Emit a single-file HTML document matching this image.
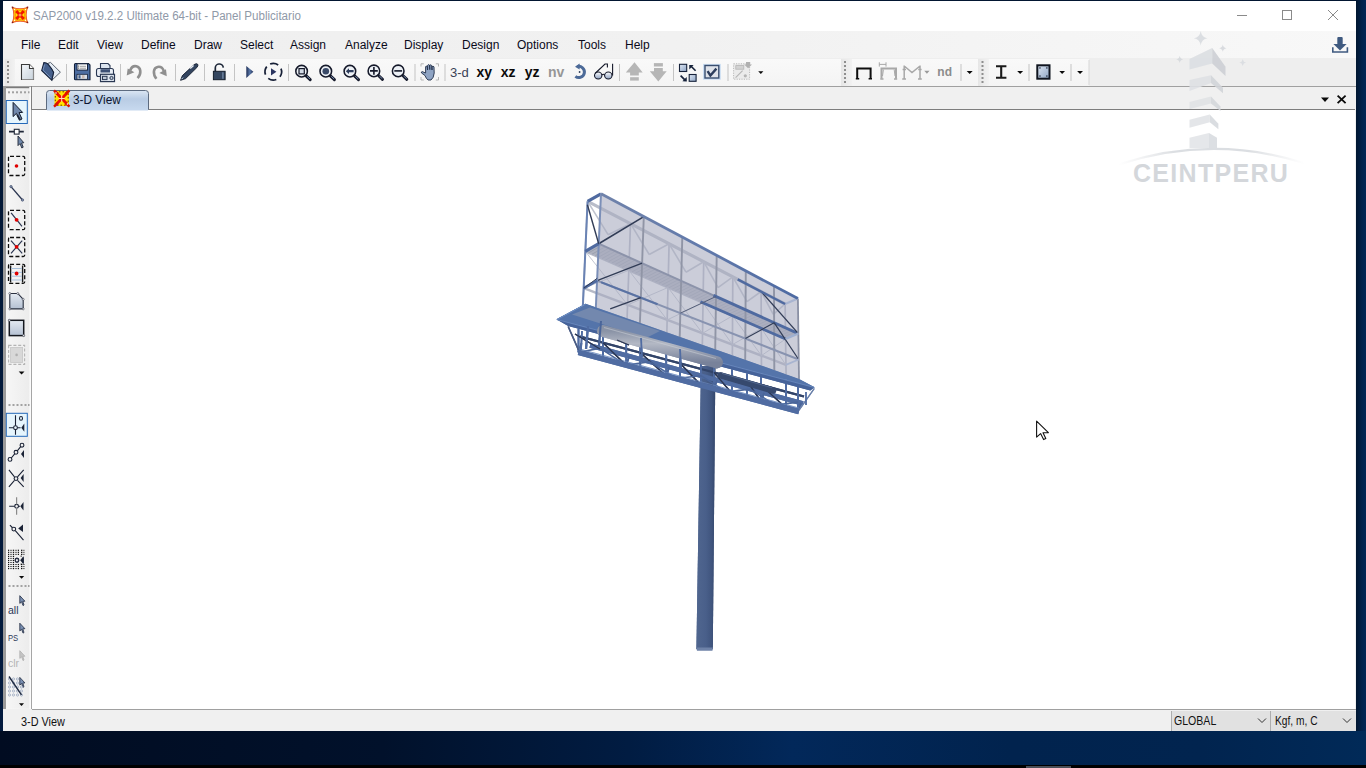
<!DOCTYPE html>
<html><head><meta charset="utf-8">
<style>
*{box-sizing:border-box}
html,body{margin:0;padding:0}
body{width:1366px;height:768px;overflow:hidden;position:relative;background:#021531;font-family:"Liberation Sans",sans-serif;}
.a{position:absolute}
.t{position:absolute;white-space:nowrap;font-family:"Liberation Sans",sans-serif;}
.menu span{position:absolute;top:38px;font-size:12px;color:#0a0a1a;white-space:nowrap}
svg{position:absolute;overflow:visible}
</style></head><body>
<!-- desktop -->
<div class="a" style="left:0;top:0;width:1366px;height:768px;background:linear-gradient(180deg,#021631 0%,#02193a 50%,#021a3e 100%)"></div>
<div class="a" style="left:0;top:731px;width:1366px;height:37px;background:linear-gradient(90deg,#010c21 0%,#01112b 28%,#011c42 46%,#02285a 58%,#01234e 74%,#01244f 88%,#012a58 100%)"></div>
<div class="a" style="left:1356px;top:0;width:10px;height:731px;background:linear-gradient(90deg,#011630,#01214b 60%,#022656)"></div>
<div class="a" style="left:0;top:765px;width:1366px;height:3px;background:#000"></div>
<div class="a" style="left:1026px;top:766px;width:45px;height:2px;background:#4a4f58"></div>

<!-- window base -->
<div class="a" style="left:3px;top:1px;width:1353px;height:730px;background:#f0f0f0"></div>
<!-- title bar -->
<div class="a" style="left:3px;top:1px;width:1353px;height:30px;background:#fff"></div>
<div id="title" class="t" style="left:33px;top:9px;font-size:12.5px;color:#8f99a8;transform:scaleX(0.927);transform-origin:left">SAP2000 v19.2.2 Ultimate 64-bit - Panel Publicitario</div>

<!-- menu bar -->
<div class="a" style="left:3px;top:31px;width:1353px;height:27px;background:linear-gradient(90deg,#efefef 0%,#f1f1f1 50%,#f8f8f8 100%)"></div>
<div class="menu">
<span style="left:21px">File</span>
<span style="left:58px">Edit</span>
<span style="left:97px">View</span>
<span style="left:141px">Define</span>
<span style="left:194px">Draw</span>
<span style="left:240px">Select</span>
<span style="left:290px">Assign</span>
<span style="left:345px">Analyze</span>
<span style="left:404px">Display</span>
<span style="left:462px">Design</span>
<span style="left:517px">Options</span>
<span style="left:578px">Tools</span>
<span style="left:625px">Help</span>
</div>

<!-- toolbar row -->
<div class="a" style="left:3px;top:58px;width:1353px;height:28px;background:#eeeeee"></div>
<div class="a" style="left:5px;top:59px;width:836px;height:27px;background:linear-gradient(180deg,#f9f9f9,#f4f4f4)"></div>
<div class="a" style="left:841px;top:59px;width:137px;height:27px;background:linear-gradient(180deg,#f9f9f9,#f4f4f4)"></div>
<div class="a" style="left:978px;top:59px;width:111px;height:27px;background:linear-gradient(180deg,#f9f9f9,#f4f4f4)"></div>
<div class="a" style="left:3px;top:86px;width:1353px;height:1px;background:#a0a0a0"></div>

<!-- left border strip -->
<div class="a" style="left:3px;top:86px;width:3px;height:623px;background:#9a9a9a"></div>
<!-- left toolbar -->
<div class="a" style="left:6px;top:87px;width:25px;height:622px;background:linear-gradient(90deg,#f7f7f7,#efefef)"></div>
<div class="a" style="left:31px;top:87px;width:1px;height:622px;background:#a0a0a0"></div>

<!-- tab row -->
<div class="a" style="left:32px;top:87px;width:1324px;height:22px;background:#f0f0f0"></div>
<div class="a" style="left:32px;top:109px;width:1323px;height:1px;background:#7d7d7d"></div>

<!-- view -->
<div class="a" style="left:32px;top:110px;width:1323px;height:599px;background:#fff"></div>
<div class="a" style="left:32px;top:709px;width:1324px;height:1px;background:#a0a0a0"></div>

<!-- status bar -->
<div class="a" style="left:4px;top:710px;width:1352px;height:21px;background:#f0f0f0"></div>
<div class="t" style="left:20.6px;top:715px;font-size:12.5px;color:#111;transform:scaleX(0.87);transform-origin:left">3-D View</div>
<div class="a" style="left:1171px;top:711px;width:99px;height:20px;background:#e1e1e1;border-left:1px solid #adadad"></div>
<div class="t" style="left:1174px;top:714px;font-size:12px;color:#111;transform:scaleX(0.88);transform-origin:left">GLOBAL</div>
<div class="a" style="left:1270px;top:711px;width:86px;height:20px;background:#e1e1e1;border-left:1px solid #adadad"></div>
<div class="t" style="left:1275px;top:714px;font-size:12px;color:#111;transform:scaleX(0.85);transform-origin:left">Kgf, m, C</div>
<svg style="left:0;top:0" width="1366" height="768">
<path d="M1258 718.5 L1262 722.5 L1266 718.5" fill="none" stroke="#333" stroke-width="1"/>
<path d="M1343 718.5 L1347 722.5 L1351 718.5" fill="none" stroke="#333" stroke-width="1"/>
</svg>

<!-- BILLBOARD -->
<svg style="left:0;top:0" width="1366" height="768">
<defs><linearGradient id="gPole" x1="0" y1="0" x2="1" y2="0"><stop offset="0" stop-color="#50668f"/><stop offset="0.5" stop-color="#495f8a"/><stop offset="0.8" stop-color="#40557e"/><stop offset="1" stop-color="#34476b"/></linearGradient><linearGradient id="gLamp" x1="0" y1="0" x2="0" y2="1"><stop offset="0" stop-color="#8a93a6"/><stop offset="0.4" stop-color="#b3b8c4"/><stop offset="1" stop-color="#78829a"/></linearGradient></defs>
<polygon points="701,366 715.4,366 712.8,649 696.4,649" fill="url(#gPole)"/>
<polygon points="696.4,647.6 712.8,647.6 712.4,650.6 697,650.6" fill="#6e82a8"/>
<line x1="590.0" y1="345.5" x2="803.0" y2="403.5" stroke="#506ca2" stroke-width="4.6"/>
<line x1="580.0" y1="336.5" x2="804.0" y2="396.5" stroke="#33456a" stroke-width="2.2"/>
<line x1="578.5" y1="352.4" x2="581.5" y2="343.2" stroke="#4a6599" stroke-width="1.8"/>
<line x1="626.2" y1="365.2" x2="629.2" y2="356.2" stroke="#4a6599" stroke-width="1.8"/>
<line x1="666.2" y1="375.9" x2="669.2" y2="367.1" stroke="#4a6599" stroke-width="1.8"/>
<line x1="714.0" y1="388.7" x2="717.0" y2="380.1" stroke="#4a6599" stroke-width="1.8"/>
<line x1="761.0" y1="401.3" x2="764.0" y2="392.9" stroke="#4a6599" stroke-width="1.8"/>
<line x1="798.0" y1="411.2" x2="801.0" y2="403.0" stroke="#4a6599" stroke-width="1.8"/>
<line x1="578.5" y1="328.7" x2="578.5" y2="352.4" stroke="#506ca2" stroke-width="1.9"/>
<line x1="603.0" y1="335.2" x2="603.0" y2="359.0" stroke="#506ca2" stroke-width="1.9"/>
<line x1="626.2" y1="341.4" x2="626.2" y2="365.2" stroke="#506ca2" stroke-width="1.9"/>
<line x1="640.2" y1="345.1" x2="640.2" y2="368.9" stroke="#506ca2" stroke-width="1.9"/>
<line x1="666.2" y1="352.0" x2="666.2" y2="375.9" stroke="#506ca2" stroke-width="1.9"/>
<line x1="680.0" y1="355.6" x2="680.0" y2="379.6" stroke="#506ca2" stroke-width="1.9"/>
<line x1="701.0" y1="361.2" x2="701.0" y2="385.2" stroke="#506ca2" stroke-width="1.9"/>
<line x1="714.0" y1="364.7" x2="714.0" y2="388.7" stroke="#506ca2" stroke-width="1.9"/>
<line x1="732.0" y1="369.4" x2="732.0" y2="393.5" stroke="#506ca2" stroke-width="1.9"/>
<line x1="747.0" y1="373.4" x2="747.0" y2="397.6" stroke="#506ca2" stroke-width="1.9"/>
<line x1="761.0" y1="377.1" x2="761.0" y2="401.3" stroke="#506ca2" stroke-width="1.9"/>
<line x1="786.0" y1="383.8" x2="786.0" y2="408.0" stroke="#506ca2" stroke-width="1.9"/>
<line x1="798.0" y1="386.9" x2="798.0" y2="411.2" stroke="#506ca2" stroke-width="1.9"/>
<line x1="603.0" y1="342.7" x2="626.2" y2="365.2" stroke="#2b3652" stroke-width="1.4"/>
<line x1="640.2" y1="352.6" x2="666.2" y2="375.9" stroke="#2b3652" stroke-width="1.4"/>
<line x1="680.0" y1="363.3" x2="701.0" y2="385.2" stroke="#2b3652" stroke-width="1.4"/>
<line x1="714.0" y1="372.4" x2="732.0" y2="393.5" stroke="#2b3652" stroke-width="1.4"/>
<line x1="747.0" y1="381.2" x2="761.0" y2="401.3" stroke="#2b3652" stroke-width="1.4"/>
<line x1="761.0" y1="385.0" x2="786.0" y2="408.0" stroke="#2b3652" stroke-width="1.4"/>
<line x1="578.5" y1="352.4" x2="799.0" y2="411.5" stroke="#506ca2" stroke-width="5.6"/>
<line x1="578.5" y1="348.8" x2="799.0" y2="408.1" stroke="#6c8bbf" stroke-width="0.9" stroke-opacity="0.7"/>
<line x1="568.2" y1="326.5" x2="578.5" y2="350.0" stroke="#4a5c84" stroke-width="1.5"/>
<line x1="582.0" y1="331.0" x2="581.0" y2="350.0" stroke="#506ca2" stroke-width="1.7"/>
<line x1="575.0" y1="334.0" x2="600.0" y2="349.0" stroke="#2b3652" stroke-width="1.2"/>
<line x1="814.3" y1="388.5" x2="799.5" y2="409.5" stroke="#6a80aa" stroke-width="1.3"/>
<line x1="806.0" y1="392.0" x2="806.0" y2="405.0" stroke="#506ca2" stroke-width="1.4"/>
<polygon points="556.4,319.3 585.5,303.7 799.0,378.9 814.6,387.2" fill="#5474aa"/>
<polygon points="556.4,319.3 814.6,387.2 810.3,390.4 568.2,326.0" fill="#46639a"/>
<polygon points="572.0,314.6 590.0,307.5 660.0,331.0 646.0,338.0" fill="#8d99b0" fill-opacity="0.55"/>
<line x1="557.5" y1="319.3" x2="585.5" y2="304.3" stroke="#6f8fc4" stroke-width="1.0"/>
<line x1="557.0" y1="319.6" x2="814.0" y2="387.4" stroke="#7090c4" stroke-width="0.9" stroke-opacity="0.8"/>
<line x1="603" y1="331" x2="717" y2="362.4" stroke="url(#gLamp)" stroke-width="12" stroke-linecap="round"/>
<line x1="604.0" y1="327.5" x2="716.0" y2="358.5" stroke="#d0d3da" stroke-width="1.2" stroke-opacity="0.5"/>
<line x1="721.0" y1="375.5" x2="773.0" y2="390.5" stroke="#36496e" stroke-width="6.5" stroke-linecap="round"/>
<line x1="722.0" y1="373.4" x2="772.0" y2="387.8" stroke="#5a6f96" stroke-width="1.0" stroke-opacity="0.8"/>
<line x1="588.0" y1="326.0" x2="586.0" y2="349.0" stroke="#506ca2" stroke-width="2.2"/>
<line x1="601.0" y1="321.0" x2="599.0" y2="346.0" stroke="#4a6599" stroke-width="2.0"/>
<line x1="641.0" y1="338.0" x2="642.0" y2="357.0" stroke="#506ca2" stroke-width="1.8"/>
<line x1="680.0" y1="349.0" x2="681.0" y2="368.0" stroke="#506ca2" stroke-width="1.8"/>
<line x1="617.0" y1="340.0" x2="629.0" y2="345.0" stroke="#2b3652" stroke-width="1.2"/>
<defs><linearGradient id="gTop" gradientUnits="userSpaceOnUse" x1="601" y1="194" x2="798" y2="299"><stop offset="0" stop-color="#6f82aa"/><stop offset="0.5" stop-color="#627aab"/><stop offset="1" stop-color="#4d6aa2"/></linearGradient></defs>
<line x1="587.6" y1="201.4" x2="582.5" y2="313.8" stroke="#b6bac7" stroke-width="1.7"/>
<line x1="630.5" y1="223.7" x2="626.7" y2="328.8" stroke="#b6bac7" stroke-width="1.7"/>
<line x1="669.1" y1="243.8" x2="666.6" y2="342.3" stroke="#b6bac7" stroke-width="1.7"/>
<line x1="703.7" y1="261.7" x2="702.2" y2="354.3" stroke="#b6bac7" stroke-width="1.7"/>
<line x1="732.8" y1="276.9" x2="732.3" y2="364.5" stroke="#b6bac7" stroke-width="1.7"/>
<line x1="761.1" y1="291.5" x2="761.5" y2="374.4" stroke="#b6bac7" stroke-width="1.7"/>
<line x1="785.1" y1="304.0" x2="786.2" y2="382.8" stroke="#b6bac7" stroke-width="1.7"/>
<line x1="587.6" y1="201.4" x2="785.1" y2="304.0" stroke="#b9bdc9" stroke-width="3.2"/>
<line x1="585.3" y1="251.3" x2="785.6" y2="339.0" stroke="#b6bac7" stroke-width="2.4"/>
<line x1="583.7" y1="288.2" x2="785.9" y2="364.9" stroke="#b6bac7" stroke-width="2.4"/>
<line x1="587.6" y1="201.4" x2="608.1" y2="234.7" stroke="#bfc3ce" stroke-width="1.6"/>
<line x1="630.5" y1="223.7" x2="608.1" y2="234.7" stroke="#bfc3ce" stroke-width="1.6"/>
<line x1="585.3" y1="251.3" x2="627.6" y2="304.9" stroke="#c3c7d2" stroke-width="1.0"/>
<line x1="628.8" y1="270.3" x2="583.7" y2="288.2" stroke="#c3c7d2" stroke-width="1.0"/>
<line x1="630.5" y1="223.7" x2="649.2" y2="254.5" stroke="#bfc3ce" stroke-width="1.6"/>
<line x1="669.1" y1="243.8" x2="649.2" y2="254.5" stroke="#bfc3ce" stroke-width="1.6"/>
<line x1="628.8" y1="270.3" x2="667.2" y2="319.9" stroke="#c3c7d2" stroke-width="1.0"/>
<line x1="668.0" y1="287.5" x2="627.6" y2="304.9" stroke="#c3c7d2" stroke-width="1.0"/>
<line x1="669.1" y1="243.8" x2="686.0" y2="272.2" stroke="#bfc3ce" stroke-width="1.6"/>
<line x1="703.7" y1="261.7" x2="686.0" y2="272.2" stroke="#bfc3ce" stroke-width="1.6"/>
<line x1="668.0" y1="287.5" x2="702.5" y2="333.3" stroke="#c3c7d2" stroke-width="1.0"/>
<line x1="703.0" y1="302.8" x2="667.2" y2="319.9" stroke="#c3c7d2" stroke-width="1.0"/>
<line x1="703.7" y1="261.7" x2="718.0" y2="287.7" stroke="#bfc3ce" stroke-width="1.6"/>
<line x1="732.8" y1="276.9" x2="718.0" y2="287.7" stroke="#bfc3ce" stroke-width="1.6"/>
<line x1="703.0" y1="302.8" x2="732.4" y2="344.6" stroke="#c3c7d2" stroke-width="1.0"/>
<line x1="732.6" y1="315.8" x2="702.5" y2="333.3" stroke="#c3c7d2" stroke-width="1.0"/>
<line x1="732.8" y1="276.9" x2="747.0" y2="301.6" stroke="#bfc3ce" stroke-width="1.6"/>
<line x1="761.1" y1="291.5" x2="747.0" y2="301.6" stroke="#bfc3ce" stroke-width="1.6"/>
<line x1="732.6" y1="315.8" x2="761.4" y2="355.6" stroke="#c3c7d2" stroke-width="1.0"/>
<line x1="761.3" y1="328.3" x2="732.4" y2="344.6" stroke="#c3c7d2" stroke-width="1.0"/>
<line x1="761.1" y1="291.5" x2="773.3" y2="314.3" stroke="#bfc3ce" stroke-width="1.6"/>
<line x1="785.1" y1="304.0" x2="773.3" y2="314.3" stroke="#bfc3ce" stroke-width="1.6"/>
<line x1="761.3" y1="328.3" x2="785.9" y2="364.9" stroke="#c3c7d2" stroke-width="1.0"/>
<line x1="785.6" y1="339.0" x2="761.4" y2="355.6" stroke="#c3c7d2" stroke-width="1.0"/>
<polygon points="598.7,243.7 798.4,333.6 785.6,339.0 585.3,251.3" fill="#aeb2bf"/>
<line x1="598.7" y1="243.7" x2="585.3" y2="251.3" stroke="#9499a8" stroke-width="0.7"/>
<line x1="602.1" y1="245.2" x2="588.7" y2="252.8" stroke="#9499a8" stroke-width="0.7"/>
<line x1="605.4" y1="246.7" x2="592.0" y2="254.2" stroke="#9499a8" stroke-width="0.7"/>
<line x1="608.7" y1="248.2" x2="595.4" y2="255.7" stroke="#9499a8" stroke-width="0.7"/>
<line x1="612.0" y1="249.7" x2="598.7" y2="257.1" stroke="#9499a8" stroke-width="0.7"/>
<line x1="615.4" y1="251.2" x2="602.0" y2="258.6" stroke="#9499a8" stroke-width="0.7"/>
<line x1="618.7" y1="252.7" x2="605.4" y2="260.1" stroke="#9499a8" stroke-width="0.7"/>
<line x1="622.0" y1="254.2" x2="608.7" y2="261.5" stroke="#9499a8" stroke-width="0.7"/>
<line x1="625.4" y1="255.7" x2="612.0" y2="263.0" stroke="#9499a8" stroke-width="0.7"/>
<line x1="628.7" y1="257.2" x2="615.4" y2="264.4" stroke="#9499a8" stroke-width="0.7"/>
<line x1="632.0" y1="258.7" x2="618.7" y2="265.9" stroke="#9499a8" stroke-width="0.7"/>
<line x1="635.3" y1="260.2" x2="622.0" y2="267.4" stroke="#9499a8" stroke-width="0.7"/>
<line x1="638.7" y1="261.7" x2="625.4" y2="268.8" stroke="#9499a8" stroke-width="0.7"/>
<line x1="642.0" y1="263.2" x2="628.7" y2="270.3" stroke="#9499a8" stroke-width="0.7"/>
<line x1="645.3" y1="264.7" x2="632.1" y2="271.8" stroke="#9499a8" stroke-width="0.7"/>
<line x1="648.6" y1="266.2" x2="635.4" y2="273.2" stroke="#9499a8" stroke-width="0.7"/>
<line x1="652.0" y1="267.7" x2="638.7" y2="274.7" stroke="#9499a8" stroke-width="0.7"/>
<line x1="655.3" y1="269.2" x2="642.1" y2="276.1" stroke="#9499a8" stroke-width="0.7"/>
<line x1="658.6" y1="270.7" x2="645.4" y2="277.6" stroke="#9499a8" stroke-width="0.7"/>
<line x1="662.0" y1="272.2" x2="648.7" y2="279.1" stroke="#9499a8" stroke-width="0.7"/>
<line x1="665.3" y1="273.7" x2="652.1" y2="280.5" stroke="#9499a8" stroke-width="0.7"/>
<line x1="668.6" y1="275.2" x2="655.4" y2="282.0" stroke="#9499a8" stroke-width="0.7"/>
<line x1="671.9" y1="276.7" x2="658.8" y2="283.4" stroke="#9499a8" stroke-width="0.7"/>
<line x1="675.3" y1="278.1" x2="662.1" y2="284.9" stroke="#9499a8" stroke-width="0.7"/>
<line x1="678.6" y1="279.6" x2="665.4" y2="286.4" stroke="#9499a8" stroke-width="0.7"/>
<line x1="681.9" y1="281.1" x2="668.8" y2="287.8" stroke="#9499a8" stroke-width="0.7"/>
<line x1="685.2" y1="282.6" x2="672.1" y2="289.3" stroke="#9499a8" stroke-width="0.7"/>
<line x1="688.6" y1="284.1" x2="675.4" y2="290.8" stroke="#9499a8" stroke-width="0.7"/>
<line x1="691.9" y1="285.6" x2="678.8" y2="292.2" stroke="#9499a8" stroke-width="0.7"/>
<line x1="695.2" y1="287.1" x2="682.1" y2="293.7" stroke="#9499a8" stroke-width="0.7"/>
<line x1="698.6" y1="288.6" x2="685.5" y2="295.1" stroke="#9499a8" stroke-width="0.7"/>
<line x1="701.9" y1="290.1" x2="688.8" y2="296.6" stroke="#9499a8" stroke-width="0.7"/>
<line x1="705.2" y1="291.6" x2="692.1" y2="298.1" stroke="#9499a8" stroke-width="0.7"/>
<line x1="708.5" y1="293.1" x2="695.5" y2="299.5" stroke="#9499a8" stroke-width="0.7"/>
<line x1="711.9" y1="294.6" x2="698.8" y2="301.0" stroke="#9499a8" stroke-width="0.7"/>
<line x1="715.2" y1="296.1" x2="702.1" y2="302.4" stroke="#9499a8" stroke-width="0.7"/>
<line x1="718.5" y1="297.6" x2="705.5" y2="303.9" stroke="#9499a8" stroke-width="0.7"/>
<line x1="721.8" y1="299.1" x2="708.8" y2="305.4" stroke="#9499a8" stroke-width="0.7"/>
<line x1="725.2" y1="300.6" x2="712.2" y2="306.8" stroke="#9499a8" stroke-width="0.7"/>
<line x1="728.5" y1="302.1" x2="715.5" y2="308.3" stroke="#9499a8" stroke-width="0.7"/>
<line x1="731.8" y1="303.6" x2="718.8" y2="309.7" stroke="#9499a8" stroke-width="0.7"/>
<line x1="735.2" y1="305.1" x2="722.2" y2="311.2" stroke="#9499a8" stroke-width="0.7"/>
<line x1="738.5" y1="306.6" x2="725.5" y2="312.7" stroke="#9499a8" stroke-width="0.7"/>
<line x1="741.8" y1="308.1" x2="728.8" y2="314.1" stroke="#9499a8" stroke-width="0.7"/>
<line x1="745.1" y1="309.6" x2="732.2" y2="315.6" stroke="#9499a8" stroke-width="0.7"/>
<line x1="748.5" y1="311.1" x2="735.5" y2="317.1" stroke="#9499a8" stroke-width="0.7"/>
<line x1="751.8" y1="312.6" x2="738.9" y2="318.5" stroke="#9499a8" stroke-width="0.7"/>
<line x1="755.1" y1="314.1" x2="742.2" y2="320.0" stroke="#9499a8" stroke-width="0.7"/>
<line x1="758.5" y1="315.6" x2="745.5" y2="321.4" stroke="#9499a8" stroke-width="0.7"/>
<line x1="761.8" y1="317.1" x2="748.9" y2="322.9" stroke="#9499a8" stroke-width="0.7"/>
<line x1="765.1" y1="318.6" x2="752.2" y2="324.4" stroke="#9499a8" stroke-width="0.7"/>
<line x1="768.4" y1="320.1" x2="755.5" y2="325.8" stroke="#9499a8" stroke-width="0.7"/>
<line x1="771.8" y1="321.6" x2="758.9" y2="327.3" stroke="#9499a8" stroke-width="0.7"/>
<line x1="775.1" y1="323.1" x2="762.2" y2="328.7" stroke="#9499a8" stroke-width="0.7"/>
<line x1="778.4" y1="324.6" x2="765.6" y2="330.2" stroke="#9499a8" stroke-width="0.7"/>
<line x1="781.7" y1="326.1" x2="768.9" y2="331.7" stroke="#9499a8" stroke-width="0.7"/>
<line x1="785.1" y1="327.6" x2="772.2" y2="333.1" stroke="#9499a8" stroke-width="0.7"/>
<line x1="788.4" y1="329.1" x2="775.6" y2="334.6" stroke="#9499a8" stroke-width="0.7"/>
<line x1="791.7" y1="330.6" x2="778.9" y2="336.1" stroke="#9499a8" stroke-width="0.7"/>
<line x1="795.1" y1="332.1" x2="782.2" y2="337.5" stroke="#9499a8" stroke-width="0.7"/>
<polygon points="601.0,193.8 797.9,298.6 799.0,379.0 595.8,308.5" fill="#a9abc0" fill-opacity="0.6"/>
<line x1="643.8" y1="216.6" x2="639.9" y2="323.8" stroke="#9095a6" stroke-width="1.9"/>
<line x1="682.3" y1="237.1" x2="679.7" y2="337.6" stroke="#9095a6" stroke-width="1.9"/>
<line x1="716.7" y1="255.4" x2="715.2" y2="349.9" stroke="#9095a6" stroke-width="1.9"/>
<line x1="745.8" y1="270.9" x2="745.2" y2="360.3" stroke="#9095a6" stroke-width="1.9"/>
<line x1="774.0" y1="285.9" x2="774.3" y2="370.4" stroke="#9095a6" stroke-width="1.9"/>
<line x1="598.7" y1="243.7" x2="714.5" y2="295.8" stroke="#8c93aa" stroke-width="2.0"/>
<line x1="597.1" y1="280.6" x2="798.7" y2="359.5" stroke="#8893b0" stroke-width="2.0"/>
<line x1="713.5" y1="295.4" x2="798.4" y2="333.6" stroke="#4f6aa0" stroke-width="2.8"/>
<line x1="700.5" y1="301.7" x2="785.6" y2="339.0" stroke="#4f6aa0" stroke-width="2.8"/>
<line x1="601.1" y1="282.2" x2="657.6" y2="304.3" stroke="#4f6aa0" stroke-width="2.0" stroke-opacity="0.8"/>
<line x1="598.7" y1="243.7" x2="643.8" y2="216.6" stroke="#313c56" stroke-width="1.6"/>
<line x1="597.1" y1="280.6" x2="642.1" y2="263.2" stroke="#313c56" stroke-width="1.3"/>
<line x1="610.2" y1="308.9" x2="640.8" y2="297.7" stroke="#313c56" stroke-width="1.3"/>
<line x1="680.3" y1="313.2" x2="716.0" y2="296.5" stroke="#56607a" stroke-width="1.0"/>
<line x1="761.1" y1="291.5" x2="798.4" y2="333.6" stroke="#313c56" stroke-width="1.3"/>
<line x1="774.1" y1="322.7" x2="798.7" y2="359.5" stroke="#313c56" stroke-width="1.2"/>
<line x1="745.4" y1="338.6" x2="774.1" y2="322.7" stroke="#313c56" stroke-width="1.1"/>
<line x1="601.0" y1="193.8" x2="587.6" y2="201.4" stroke="#4f6aa0" stroke-width="3.2"/>
<line x1="587.6" y1="201.4" x2="582.4" y2="316.1" stroke="#6a83b4" stroke-width="2.0"/>
<line x1="601.0" y1="193.8" x2="595.8" y2="308.5" stroke="#7b8fb8" stroke-width="2.0"/>
<line x1="598.7" y1="243.7" x2="585.3" y2="251.3" stroke="#4f6aa0" stroke-width="3.2"/>
<line x1="597.1" y1="280.6" x2="583.7" y2="288.2" stroke="#4f6aa0" stroke-width="2.8"/>
<line x1="587.4" y1="204.8" x2="598.7" y2="243.7" stroke="#313c56" stroke-width="1.4"/>
<line x1="583.7" y1="288.2" x2="597.2" y2="278.3" stroke="#313c56" stroke-width="1.0"/>
<line x1="797.9" y1="298.6" x2="799.0" y2="379.0" stroke="#8a90a4" stroke-width="1.8"/>
<line x1="798.4" y1="333.6" x2="785.6" y2="339.0" stroke="#9fb0d0" stroke-width="2.2"/>
<line x1="797.9" y1="298.6" x2="785.1" y2="304.0" stroke="#a8b4d0" stroke-width="2.2"/>
<line x1="798.7" y1="359.5" x2="785.9" y2="364.9" stroke="#a8b4d0" stroke-width="1.8"/>
<line x1="601.0" y1="193.8" x2="797.9" y2="298.6" stroke="url(#gTop)" stroke-width="2.8"/>
<line x1="737.7" y1="279.4" x2="785.1" y2="304.0" stroke="#4f6aa0" stroke-width="2.4"/>

<defs><linearGradient id="gPole" x1="0" y1="0" x2="1" y2="0"><stop offset="0" stop-color="#50668f"/><stop offset="0.5" stop-color="#495f8a"/><stop offset="0.8" stop-color="#40557e"/><stop offset="1" stop-color="#34476b"/></linearGradient><linearGradient id="gLamp" x1="0" y1="0" x2="0" y2="1"><stop offset="0" stop-color="#8a93a6"/><stop offset="0.4" stop-color="#b3b8c4"/><stop offset="1" stop-color="#78829a"/></linearGradient></defs>
<polygon points="701,366 715.4,366 712.8,649 696.4,649" fill="url(#gPole)"/>
<polygon points="696.4,647.6 712.8,647.6 712.4,650.6 697,650.6" fill="#6e82a8"/>
<line x1="590.0" y1="345.5" x2="803.0" y2="403.5" stroke="#506ca2" stroke-width="4.6"/>
<line x1="580.0" y1="336.5" x2="804.0" y2="396.5" stroke="#33456a" stroke-width="2.2"/>
<line x1="578.5" y1="352.4" x2="581.5" y2="343.2" stroke="#4a6599" stroke-width="1.8"/>
<line x1="626.2" y1="365.2" x2="629.2" y2="356.2" stroke="#4a6599" stroke-width="1.8"/>
<line x1="666.2" y1="375.9" x2="669.2" y2="367.1" stroke="#4a6599" stroke-width="1.8"/>
<line x1="714.0" y1="388.7" x2="717.0" y2="380.1" stroke="#4a6599" stroke-width="1.8"/>
<line x1="761.0" y1="401.3" x2="764.0" y2="392.9" stroke="#4a6599" stroke-width="1.8"/>
<line x1="798.0" y1="411.2" x2="801.0" y2="403.0" stroke="#4a6599" stroke-width="1.8"/>
<line x1="578.5" y1="328.7" x2="578.5" y2="352.4" stroke="#506ca2" stroke-width="1.9"/>
<line x1="603.0" y1="335.2" x2="603.0" y2="359.0" stroke="#506ca2" stroke-width="1.9"/>
<line x1="626.2" y1="341.4" x2="626.2" y2="365.2" stroke="#506ca2" stroke-width="1.9"/>
<line x1="640.2" y1="345.1" x2="640.2" y2="368.9" stroke="#506ca2" stroke-width="1.9"/>
<line x1="666.2" y1="352.0" x2="666.2" y2="375.9" stroke="#506ca2" stroke-width="1.9"/>
<line x1="680.0" y1="355.6" x2="680.0" y2="379.6" stroke="#506ca2" stroke-width="1.9"/>
<line x1="701.0" y1="361.2" x2="701.0" y2="385.2" stroke="#506ca2" stroke-width="1.9"/>
<line x1="714.0" y1="364.7" x2="714.0" y2="388.7" stroke="#506ca2" stroke-width="1.9"/>
<line x1="732.0" y1="369.4" x2="732.0" y2="393.5" stroke="#506ca2" stroke-width="1.9"/>
<line x1="747.0" y1="373.4" x2="747.0" y2="397.6" stroke="#506ca2" stroke-width="1.9"/>
<line x1="761.0" y1="377.1" x2="761.0" y2="401.3" stroke="#506ca2" stroke-width="1.9"/>
<line x1="786.0" y1="383.8" x2="786.0" y2="408.0" stroke="#506ca2" stroke-width="1.9"/>
<line x1="798.0" y1="386.9" x2="798.0" y2="411.2" stroke="#506ca2" stroke-width="1.9"/>
<line x1="603.0" y1="342.7" x2="626.2" y2="365.2" stroke="#2b3652" stroke-width="1.4"/>
<line x1="640.2" y1="352.6" x2="666.2" y2="375.9" stroke="#2b3652" stroke-width="1.4"/>
<line x1="680.0" y1="363.3" x2="701.0" y2="385.2" stroke="#2b3652" stroke-width="1.4"/>
<line x1="714.0" y1="372.4" x2="732.0" y2="393.5" stroke="#2b3652" stroke-width="1.4"/>
<line x1="747.0" y1="381.2" x2="761.0" y2="401.3" stroke="#2b3652" stroke-width="1.4"/>
<line x1="761.0" y1="385.0" x2="786.0" y2="408.0" stroke="#2b3652" stroke-width="1.4"/>
<line x1="578.5" y1="352.4" x2="600.0" y2="348.2" stroke="#4a6599" stroke-width="1.6"/>
<line x1="600.0" y1="348.2" x2="626.0" y2="365.1" stroke="#4a6599" stroke-width="1.6"/>
<line x1="626.0" y1="365.1" x2="650.0" y2="361.8" stroke="#4a6599" stroke-width="1.6"/>
<line x1="650.0" y1="361.8" x2="676.0" y2="378.5" stroke="#4a6599" stroke-width="1.6"/>
<line x1="676.0" y1="378.5" x2="701.0" y2="375.7" stroke="#4a6599" stroke-width="1.6"/>
<line x1="701.0" y1="375.7" x2="726.0" y2="391.9" stroke="#4a6599" stroke-width="1.6"/>
<line x1="726.0" y1="391.9" x2="750.0" y2="389.1" stroke="#4a6599" stroke-width="1.6"/>
<line x1="750.0" y1="389.1" x2="775.0" y2="405.1" stroke="#4a6599" stroke-width="1.6"/>
<line x1="775.0" y1="405.1" x2="798.0" y2="402.1" stroke="#4a6599" stroke-width="1.6"/>
<line x1="578.5" y1="352.4" x2="799.0" y2="411.5" stroke="#506ca2" stroke-width="5.6"/>
<line x1="578.5" y1="348.8" x2="799.0" y2="408.1" stroke="#6c8bbf" stroke-width="0.9" stroke-opacity="0.7"/>
<line x1="568.2" y1="326.5" x2="578.5" y2="350.0" stroke="#4a5c84" stroke-width="1.5"/>
<line x1="582.0" y1="331.0" x2="581.0" y2="350.0" stroke="#506ca2" stroke-width="1.7"/>
<line x1="575.0" y1="334.0" x2="600.0" y2="349.0" stroke="#2b3652" stroke-width="1.2"/>
<line x1="814.3" y1="388.5" x2="799.5" y2="409.5" stroke="#6a80aa" stroke-width="1.3"/>
<line x1="806.0" y1="392.0" x2="806.0" y2="405.0" stroke="#506ca2" stroke-width="1.4"/>
<polygon points="556.4,319.3 585.5,303.7 799.0,378.9 814.6,387.2" fill="#5474aa"/>
<polygon points="556.4,319.3 814.6,387.2 810.3,390.4 568.2,326.0" fill="#46639a"/>
<polygon points="572.0,314.6 590.0,307.5 660.0,331.0 646.0,338.0" fill="#8d99b0" fill-opacity="0.55"/>
<line x1="557.5" y1="319.3" x2="585.5" y2="304.3" stroke="#6f8fc4" stroke-width="1.0"/>
<line x1="557.0" y1="319.6" x2="814.0" y2="387.4" stroke="#7090c4" stroke-width="0.9" stroke-opacity="0.8"/>
<line x1="603" y1="331" x2="717" y2="362.4" stroke="url(#gLamp)" stroke-width="12" stroke-linecap="round"/>
<line x1="604.0" y1="327.5" x2="716.0" y2="358.5" stroke="#d0d3da" stroke-width="1.2" stroke-opacity="0.5"/>
<line x1="721.0" y1="375.5" x2="773.0" y2="390.5" stroke="#36496e" stroke-width="6.5" stroke-linecap="round"/>
<line x1="722.0" y1="373.4" x2="772.0" y2="387.8" stroke="#5a6f96" stroke-width="1.0" stroke-opacity="0.8"/>
<line x1="588.0" y1="326.0" x2="586.0" y2="349.0" stroke="#506ca2" stroke-width="2.2"/>
<line x1="601.0" y1="321.0" x2="599.0" y2="346.0" stroke="#4a6599" stroke-width="2.0"/>
<line x1="641.0" y1="338.0" x2="642.0" y2="357.0" stroke="#506ca2" stroke-width="1.8"/>
<line x1="680.0" y1="349.0" x2="681.0" y2="368.0" stroke="#506ca2" stroke-width="1.8"/>
<line x1="617.0" y1="340.0" x2="629.0" y2="345.0" stroke="#2b3652" stroke-width="1.2"/>

</svg>
<!-- /BILLBOARD -->
<!-- TOP TOOLBAR ICONS -->
<svg style="left:0;top:0" width="1366" height="768">
<defs>
<linearGradient id="gDoc" x1="0" y1="0" x2="1" y2="1"><stop offset="0" stop-color="#f4f7fa"/><stop offset="1" stop-color="#c9d3dc"/></linearGradient>
<linearGradient id="gBlue" x1="0" y1="0" x2="1" y2="1"><stop offset="0" stop-color="#dfe8f4"/><stop offset="1" stop-color="#8ea4c4"/></linearGradient>
<linearGradient id="gPlay" x1="0" y1="0" x2="1" y2="0"><stop offset="0" stop-color="#1f2e55"/><stop offset="0.5" stop-color="#5a78a8"/><stop offset="1" stop-color="#1f2e55"/></linearGradient>
<linearGradient id="gLens" x1="0" y1="0" x2="0" y2="1"><stop offset="0" stop-color="#ffffff"/><stop offset="1" stop-color="#8fa2c2"/></linearGradient>
<linearGradient id="gGrip" x1="0" y1="0" x2="1" y2="0"><stop offset="0" stop-color="#e6e6e6"/><stop offset="1" stop-color="#f2f2f2"/></linearGradient>
</defs>
<!-- grips -->
<rect x="5" y="59" width="10" height="27" fill="url(#gGrip)"/>
<rect x="841" y="59" width="11" height="27" fill="url(#gGrip)"/>
<rect x="978" y="59" width="11" height="27" fill="url(#gGrip)"/>
<g fill="#8e8e8e">
<rect x="7" y="61" width="2" height="2"/><rect x="7" y="65" width="2" height="2"/><rect x="7" y="69" width="2" height="2"/><rect x="7" y="73" width="2" height="2"/><rect x="7" y="77" width="2" height="2"/><rect x="7" y="81" width="2" height="2"/>
<rect x="844" y="61" width="2" height="2"/><rect x="844" y="65" width="2" height="2"/><rect x="844" y="69" width="2" height="2"/><rect x="844" y="73" width="2" height="2"/><rect x="844" y="77" width="2" height="2"/><rect x="844" y="81" width="2" height="2"/>
<rect x="981.5" y="61" width="2" height="2"/><rect x="981.5" y="65" width="2" height="2"/><rect x="981.5" y="69" width="2" height="2"/><rect x="981.5" y="73" width="2" height="2"/><rect x="981.5" y="77" width="2" height="2"/><rect x="981.5" y="81" width="2" height="2"/>
</g>
<!-- separators -->
<g fill="#c4c4c4">
<rect x="66" y="64" width="1" height="17"/><rect x="120" y="64" width="1" height="17"/><rect x="175" y="64" width="1" height="17"/>
<rect x="204" y="64" width="1" height="17"/><rect x="234" y="64" width="1" height="17"/><rect x="288" y="64" width="1" height="17"/>
<rect x="414.5" y="64" width="1" height="17"/><rect x="444.5" y="64" width="1" height="17"/><rect x="619" y="64" width="1" height="17"/>
<rect x="673" y="64" width="1" height="17"/><rect x="727.5" y="64" width="1" height="17"/><rect x="960.5" y="64" width="1" height="17"/>
<rect x="1028.5" y="64" width="1" height="17"/><rect x="1070.5" y="64" width="1" height="17"/>
</g>
<rect x="1088.5" y="60" width="1" height="25" fill="#d8d8d8"/>
<!-- new doc -->
<path d="M21.5 64.5 H29.5 L33.5 68.5 V79.5 H21.5 Z" fill="url(#gDoc)" stroke="#3a3a3a" stroke-width="1.1"/>
<path d="M29.5 64.5 V68.5 H33.5" fill="#fff" stroke="#3a3a3a" stroke-width="1.1"/>
<path d="M22 79.5 H33.5 V69" fill="none" stroke="#8a8a8a" stroke-width="1"/>
<!-- open folder -->
<path d="M47 63.8 L50.5 62.4 L60.4 72.2 L51.8 80.3 L53.6 72.4 L51.2 68.2 Z" fill="#e6edf5" stroke="#4a5260" stroke-width="0.9"/>
<path d="M43.9 62.5 Q46.5 62.6 48 64.2 L51.3 68.3 L53.6 72.4 L51.8 80.3 L41.7 70.6 Z" fill="#46608c" stroke="#15213a" stroke-width="1.1"/>
<path d="M44.6 64.6 L43 70 L50.6 77.6" fill="none" stroke="#7590bb" stroke-width="1"/>
<!-- save -->
<path d="M74.5 64.5 Q74.5 63.5 75.5 63.5 H88.5 L90 65 V79.8 H75.5 Q74.5 79.8 74.5 78.8 Z" fill="#4d6ea2" stroke="#14213a" stroke-width="1.1"/>
<rect x="77" y="63.8" width="10.5" height="6.3" fill="#fbfcfd" stroke="#14213a" stroke-width="1"/>
<path d="M80 66.3 H86 M80 68.2 H86" stroke="#777" stroke-width="0.7"/>
<rect x="78.2" y="65.6" width="1" height="1" fill="#333"/><rect x="78.2" y="67.6" width="1" height="1" fill="#333"/>
<rect x="77" y="74.3" width="10.5" height="5" fill="#d9dfe8" stroke="#14213a" stroke-width="0.8"/>
<rect x="78.5" y="75.2" width="2" height="3.3" fill="#3e5a86"/><rect x="82" y="75.2" width="2.5" height="3.3" fill="#c8b8b0"/>
<!-- print -->
<path d="M100.5 63.5 H108 L110 65.5 V72 H100.5 Z" fill="#dce5ef" stroke="#2a3853" stroke-width="1.1"/>
<rect x="96.5" y="68.5" width="17" height="8" rx="2" fill="#e9eef5" stroke="#2a3853" stroke-width="1.1"/>
<rect x="100.5" y="69.2" width="9.5" height="3.3" fill="#3c5075"/>
<rect x="100.5" y="74.3" width="14" height="7.3" fill="#dfe6ef" stroke="#2a3853" stroke-width="1.2"/>
<rect x="102.5" y="76.3" width="4.5" height="3.3" fill="#bfc9d6" stroke="#2a3853" stroke-width="1"/>
<circle cx="111.5" cy="78" r="1.6" fill="#bfc9d6" stroke="#2a3853" stroke-width="1"/>
<!-- undo / redo -->
<g fill="none" stroke="#8f8f8f" stroke-width="2.6" stroke-linecap="butt">
<path d="M137.6 78.2 C141.8 73.5 141 67.2 136.4 66.2 C133.2 65.6 131 68 130.2 70.5"/>
<path d="M156.4 78.8 C152.6 74 153.2 67.8 157.6 66.9 C160.9 66.3 163 68.6 163.8 71"/>
</g>
<path d="M126.7 75.5 L127.7 68.6 L134.4 72.3 Z" fill="#8f8f8f"/>
<path d="M166.8 76.3 L166 69.2 L159.3 73 Z" fill="#8f8f8f"/>
<!-- pen -->
<path d="M180.6 80.3 L182.4 75.6 L194.2 64.6 Q196.6 62.8 197.8 64.4 Q198.4 65.6 196.8 67.6 L185.6 78.6 Z" fill="#33445f" stroke="#101a2b" stroke-width="0.9"/>
<path d="M190.2 68.6 L193.6 65.6" stroke="#e8eef6" stroke-width="1.3"/>
<path d="M181.6 79.2 L183 77.6" stroke="#cfe0f0" stroke-width="1"/>
<!-- lock -->
<path d="M215.3 71.6 V68.4 A4 4 0 0 1 223.3 67.6" fill="none" stroke="#1c2638" stroke-width="1.7"/>
<rect x="213.4" y="71.3" width="11.7" height="8.4" fill="#34465f" stroke="#151e2c" stroke-width="1"/>
<rect x="222.3" y="72.3" width="1.2" height="6.5" fill="#7a90ae"/>
<!-- play -->
<path d="M246.3 66 L253.4 71.8 L246.3 77.9 Z" fill="url(#gPlay)"/>
<!-- run dashed circle -->
<circle cx="273.3" cy="71.7" r="8.3" fill="none" stroke="#161f36" stroke-width="1.7" stroke-dasharray="8.4 4.64" transform="rotate(-112.5 273.3 71.7)"/>
<path d="M271 68.3 L276.4 71.7 L271 75.6 Z" fill="#2b3560"/>
<!-- zoom icons -->
<g fill="#edf1f6" stroke="#15192a" stroke-width="1.55">
<circle cx="301.6" cy="71.2" r="5.8"/><circle cx="325.8" cy="71.2" r="5.8"/><circle cx="349.9" cy="71.2" r="5.8"/>
<circle cx="373.9" cy="70.9" r="5.8"/><circle cx="398.2" cy="70.9" r="5.8"/>
</g>
<g stroke="#15192a" stroke-width="3" stroke-linecap="round">
<path d="M306.2 75.8 L310.2 79.6"/><path d="M330.4 75.8 L334.4 79.6"/><path d="M354.5 75.8 L358.5 79.6"/>
<path d="M378.5 75.5 L382.5 79.3"/><path d="M402.8 75.5 L406.8 79.3"/>
</g>
<g stroke="#7f97bb" stroke-width="0.9">
<path d="M307 76.3 L310 79"/><path d="M331.2 76.3 L334.2 79"/><path d="M355.3 76.3 L358.3 79"/><path d="M379.3 76 L382.3 78.7"/><path d="M403.6 76 L406.6 78.7"/>
</g>
<rect x="299" y="68.6" width="5.3" height="5.3" fill="#d4dce8" stroke="#15192a" stroke-width="1.2"/>
<circle cx="325.8" cy="71.2" r="3.3" fill="#3a4a68"/>
<path d="M345.8 71.2 L349 68.3 V70.1 H353.6 V72.3 H349 V74.1 Z" fill="#2e3d5c"/>
<path d="M370 70.9 H377.8 M373.9 67 V74.8" stroke="#15192a" stroke-width="1.6"/>
<path d="M394.3 70.9 H402.1" stroke="#15192a" stroke-width="1.6"/>
<!-- hand -->
<g fill="none" stroke="#b5b5b5" stroke-width="1">
<path d="M421 66.5 V63.8 H423.8 M435.8 63.8 H438.5 V66.5 M438.5 77 V80 H435.8 M423.8 80 H421 V77"/>
</g>
<path d="M425 75.5 L421.5 73 Q420.8 71.8 422.3 71.6 L425.6 73 V66.8 Q426 65.6 427.1 66.3 L427.6 70 V65.3 Q428.3 64 429.4 65 L429.8 69.6 V65.2 Q430.7 64.3 431.6 65.4 L432 70 V66.6 Q433 65.6 434 66.8 L434.2 73 Q433.8 78 431 80 H428 Q426 78.5 425 75.5 Z" fill="#8ea3c3" stroke="#22304a" stroke-width="0.9"/>
<!-- rotate -->
<path d="M577.2 66.6 A5.6 5.6 0 1 1 575.4 76.4" fill="none" stroke="#4c6a98" stroke-width="3"/>
<path d="M575 66.8 L579.6 63.6 L579.6 69.6 Z" fill="#4c6a98"/>
<circle cx="579.6" cy="72" r="0.9" fill="#2e3e5a"/>
<!-- glasses -->
<ellipse cx="598.2" cy="75.5" rx="3.7" ry="3.5" fill="url(#gLens)" stroke="#15192a" stroke-width="1.1"/>
<ellipse cx="608.3" cy="75.5" rx="3.7" ry="3.5" fill="url(#gLens)" stroke="#15192a" stroke-width="1.1"/>
<path d="M595 73.5 L605 64 H607.4 V67.5 M612.6 63.7 V75.5 M601.9 75 Q603.2 73.5 604.6 75" fill="none" stroke="#15192a" stroke-width="1.1"/>
<!-- up/down arrows -->
<path d="M634.5 62.2 L642.7 72.6 H638.8 V75.4 H630.1 V72.6 H625.8 Z" fill="#b6b6b6"/>
<rect x="630.1" y="77.2" width="8.7" height="3.4" fill="#b6b6b6"/>
<rect x="653.9" y="63.1" width="9" height="3.4" fill="#b6b6b6"/>
<path d="M654 68 H662.8 V71.3 H666.7 L658.3 81.6 L649.8 71.3 H654 Z" fill="#b6b6b6"/>
<!-- grid arrows icon -->
<rect x="679.5" y="64.3" width="7.2" height="7.2" fill="url(#gBlue)" stroke="#16223a" stroke-width="1.1"/>
<rect x="689.2" y="74.5" width="6.9" height="6.8" fill="url(#gBlue)" stroke="#16223a" stroke-width="1.1"/>
<path d="M695.6 70.8 L690.6 65.8" stroke="#16223a" stroke-width="1.6"/>
<path d="M689.2 65 L693.6 65.1 L689.3 69.4 Z" fill="#16223a"/>
<path d="M680.6 75.6 L685.6 80.6" stroke="#16223a" stroke-width="1.6"/>
<path d="M686.8 81.4 L682.4 81.3 L686.7 77 Z" fill="#16223a"/>
<!-- checkbox -->
<rect x="703" y="63.9" width="17.8" height="15.8" fill="#c9dcf2"/>
<rect x="705" y="65.5" width="13.8" height="12.5" fill="#dfe3ea" stroke="#3a4e6e" stroke-width="1.4"/>
<path d="M707.6 71.2 L710.4 75.6 L716.4 68.6" fill="none" stroke="#2d3d5c" stroke-width="2.4"/>
<!-- grey icon -->
<rect x="733.6" y="63.8" width="16" height="15.4" fill="#ebebeb" stroke="#b9b9b9" stroke-width="1" stroke-dasharray="1.2 1.2"/>
<rect x="735.8" y="65.6" width="8" height="3.6" fill="#d2d2d2" stroke="#b5b5b5" stroke-width="0.8"/>
<path d="M735.6 77.6 L742.6 70.6" stroke="#b5b5b5" stroke-width="1.1"/>
<circle cx="745.3" cy="75.8" r="1.6" fill="#b5b5b5"/>
<path d="M746 62 H750.2 V64.6 H752 L748.1 68.2 L744.2 64.6 H746 Z" fill="#b0b0b0"/>
<!-- dropdown triangles -->
<g fill="#0a0a0a">
<path d="M758.2 71.2 H763.4 L760.8 74 Z"/>
<path d="M966.7 70.9 H972.7 L969.7 74.1 Z"/>
<path d="M1017.2 70.9 H1023.1 L1020.15 73.9 Z"/>
<path d="M1059.3 70.9 H1065 L1062.15 73.9 Z"/>
<path d="M1077.1 70.9 H1083 L1080.05 73.9 Z"/>
</g>
<!-- frame icons -->
<path d="M857.2 78.6 V68.6 H870.6 V78.6" fill="none" stroke="#0e0e0e" stroke-width="2"/>
<path d="M855.8 78.8 H859.2 M868.6 78.8 H872" stroke="#0e0e0e" stroke-width="1.6"/>
<g fill="none" stroke="#a8a8a8">
<path d="M879.3 62.3 V66.6 M886 62.3 V66.6 M879.3 64.4 H886" stroke-width="1"/>
<path d="M881.5 78.8 V68.6 H896 V78.8" stroke-width="2"/>
<path d="M880.3 79 H883.5 M894 79 H897.2" stroke-width="1.4"/>
<path d="M883.4 69.6 L882.5 76 M894.2 69.6 L895 76" stroke-width="1"/>
<path d="M904.2 79 V65.4 M920 79 V65.4 M904.2 66 L912 72.6 L920 66 M902.2 79 H906 M918 79 H921.8 M902.6 69.6 H906 M918.2 69.6 H921.6" stroke-width="1.5"/>
</g>
<path d="M924.3 70.8 H929.5 L926.9 73.8 Z" fill="#9a9a9a"/>
<!-- I beam -->
<path d="M996 66.2 H1006.4 M996 77.8 H1006.4 M1001.2 66.2 V77.8" stroke="#1a1a1a" stroke-width="2.1"/>
<!-- rect icon -->
<rect x="1037.3" y="65.3" width="12.2" height="13.4" fill="url(#gBlue)" stroke="#0f141f" stroke-width="2"/>
<g fill="#1a2233"><rect x="1039.3" y="67.3" width="1.3" height="1.3"/><rect x="1046.2" y="67.3" width="1.3" height="1.3"/><rect x="1039.3" y="75.4" width="1.3" height="1.3"/><rect x="1046.2" y="75.4" width="1.3" height="1.3"/></g>
<!-- download icon right -->
<rect x="1337.3" y="37" width="5.4" height="7.4" rx="1" fill="#3f5a80"/>
<path d="M1333.4 44 H1346.6 L1340 50.6 Z" fill="#3f5a80"/>
<path d="M1332.8 47.2 V52 H1347.4 V47.2" fill="none" stroke="#3f5a80" stroke-width="1.6"/>
<!-- window controls -->
<path d="M1237 15.5 H1247" stroke="#8a8a8a" stroke-width="1"/>
<rect x="1282.5" y="10.5" width="9" height="9" fill="none" stroke="#8a8a8a" stroke-width="1"/>
<path d="M1328 10 L1338 20 M1338 10 L1328 20" stroke="#8a8a8a" stroke-width="1"/>
<!-- tab row right controls -->
<path d="M1321 97.6 H1329 L1325 102 Z" fill="#0a0a0a"/>
<path d="M1337.6 95.6 L1345.6 103.2 M1345.6 95.6 L1337.6 103.2" stroke="#0a0a0a" stroke-width="1.8"/>
</svg>
<div class="t" style="left:450px;top:64.5px;font-size:13px;color:#3b4257">3-d</div>
<div class="t" style="left:476.5px;top:63.5px;font-size:14px;font-weight:bold;color:#0a0a0a">xy</div>
<div class="t" style="left:500.8px;top:63.5px;font-size:14px;font-weight:bold;color:#0a0a0a">xz</div>
<div class="t" style="left:524.8px;top:63.5px;font-size:14px;font-weight:bold;color:#0a0a0a">yz</div>
<div class="t" style="left:548px;top:63.5px;font-size:14px;font-weight:bold;color:#969696">nv</div>
<div class="t" style="left:937.3px;top:65px;font-size:12px;font-weight:bold;color:#8c8c8c">nd</div>

<!-- LEFT TOOLBAR -->
<svg style="left:0;top:0" width="1366" height="768">
<defs>
<linearGradient id="gPoly" x1="0" y1="0" x2="0" y2="1"><stop offset="0" stop-color="#e4eaf2"/><stop offset="1" stop-color="#b4c0d2"/></linearGradient>
<linearGradient id="gPanel" x1="0" y1="0" x2="1" y2="0"><stop offset="0" stop-color="#f6f6f6"/><stop offset="1" stop-color="#ececec"/></linearGradient>
</defs>
<!-- panel backgrounds -->
<rect x="6" y="87" width="23.5" height="313" fill="url(#gPanel)"/>
<rect x="6" y="400" width="23.5" height="185" fill="url(#gPanel)"/>
<rect x="6" y="585" width="23.5" height="123" fill="url(#gPanel)"/>
<rect x="6" y="87" width="23.5" height="1.2" fill="#7a7a7a"/>
<rect x="29.5" y="87" width="1.5" height="622" fill="#fbfbfb"/>
<rect x="31" y="86" width="1" height="24" fill="#808080"/>
<rect x="31" y="110" width="1" height="599" fill="#a6a6a6"/>
<g fill="#a2a2a2">
<rect x="8" y="91.3" width="2" height="2"/><rect x="12" y="91.3" width="2" height="2"/><rect x="16" y="91.3" width="2" height="2"/><rect x="20" y="91.3" width="2" height="2"/><rect x="24" y="91.3" width="2" height="2"/><rect x="28" y="91.3" width="1.5" height="2"/>
<rect x="8.5" y="404" width="2" height="2"/><rect x="12.5" y="404" width="2" height="2"/><rect x="16.5" y="404" width="2" height="2"/><rect x="20.5" y="404" width="2" height="2"/><rect x="24.5" y="404" width="2" height="2"/><rect x="28" y="404" width="1.5" height="2"/>
<rect x="8.5" y="585" width="2" height="2"/><rect x="12.5" y="585" width="2" height="2"/><rect x="16.5" y="585" width="2" height="2"/><rect x="20.5" y="585" width="2" height="2"/><rect x="24.5" y="585" width="2" height="2"/><rect x="28" y="585" width="1.5" height="2"/>
</g>
<!-- selected buttons -->
<rect x="6.3" y="100.5" width="21" height="23" fill="#e6f5fd" stroke="#2468b8" stroke-width="1"/>
<rect x="6.3" y="413.3" width="21" height="23" fill="#e6f5fd" stroke="#2468b8" stroke-width="1"/>
<!-- select arrow -->
<path d="M13.1 102.4 V116.6 L16.4 113.4 L19.6 120.2 L22 119 L19 112.6 L22.6 112.4 Z" fill="#6f87aa" stroke="#121a2a" stroke-width="1"/>
<path d="M17.2 114.8 L20 120" stroke="#1e2838" stroke-width="1.8"/>
<!-- draw special joint -->
<path d="M9 131.7 H14.3 M19 131.7 H23.8" stroke="#1f2737" stroke-width="1.8"/>
<rect x="14.3" y="129.3" width="4.8" height="4.8" fill="#fff" stroke="#1f2737" stroke-width="1.1"/>
<path d="M18 136 V145.6 L20 143.6 L21.8 148 L23.2 147.2 L21.6 143 L23.8 142.7 Z" fill="#7088aa" stroke="#1f2737" stroke-width="0.9"/>
<!-- dashed rects -->
<g fill="none" stroke="#0e0e0e" stroke-width="1.3" stroke-dasharray="4 2.2">
<rect x="8.5" y="156.3" width="16.2" height="19.2" rx="1.5"/>
<rect x="8.5" y="210.3" width="16.2" height="19.4" rx="1.5"/>
<rect x="8.5" y="237.5" width="16.2" height="19" rx="1.5"/>
<rect x="8.5" y="264.3" width="16.2" height="19" rx="1.5"/>
</g>
<circle cx="16.5" cy="166" r="1.8" fill="#e00000"/>
<!-- frame line -->
<path d="M11 186.6 L22.5 200" stroke="#2a3550" stroke-width="1.3"/>
<circle cx="11" cy="186.6" r="1.2" fill="#8090b0" stroke="#3a4560" stroke-width="0.6"/>
<circle cx="22.5" cy="200" r="1.2" fill="#8090b0" stroke="#3a4560" stroke-width="0.6"/>
<!-- frame in dashed -->
<path d="M11.1 212.8 L22 226.4" stroke="#2a3550" stroke-width="1.2"/>
<circle cx="16.6" cy="219.8" r="1.9" fill="#e00000"/>
<path d="M11 240.6 L22.2 253.4 M22.2 240.6 L11 253.4" stroke="#2a3550" stroke-width="1.2"/>
<circle cx="16.6" cy="246.8" r="1.9" fill="#e00000"/>
<path d="M10.6 265.5 V282.5 M22.6 265.5 V282.5" stroke="#1a1a1a" stroke-width="1.4"/>
<path d="M11 268.5 H22 M11 272.4 H22 M11 276.2 H22 M11 280 H22" stroke="#a8c0dc" stroke-width="1"/>
<circle cx="16.6" cy="273.5" r="1.9" fill="#e00000"/>
<!-- poly -->
<path d="M9.8 293.5 H17.8 L23.2 299.3 V308.9 H9.8 Z" fill="url(#gPoly)" stroke="#2a3040" stroke-width="1.1"/>
<g fill="#fff" stroke="#3a4050" stroke-width="0.6"><circle cx="9.8" cy="293.5" r="1"/><circle cx="17.8" cy="293.5" r="1"/><circle cx="23.2" cy="299.3" r="1"/><circle cx="23.2" cy="308.9" r="1"/><circle cx="9.8" cy="308.9" r="1"/></g>
<!-- rect -->
<rect x="9.3" y="320.3" width="14.4" height="15.3" fill="url(#gPoly)" stroke="#15181f" stroke-width="1.5"/>
<g fill="#fff" stroke="#3a4050" stroke-width="0.6"><circle cx="9.3" cy="320.3" r="1"/><circle cx="23.7" cy="335.6" r="1"/></g>
<!-- grey area -->
<rect x="8.6" y="345.4" width="16" height="19" fill="none" stroke="#b4b4b4" stroke-width="1.1" stroke-dasharray="3 1.8"/>
<rect x="10.6" y="347.4" width="12" height="15" fill="#d8d8d8" stroke="#c6c6c6" stroke-width="0.8"/>
<circle cx="16.6" cy="354.9" r="1.3" fill="#b0b0b0"/>
<!-- dropdowns -->
<g fill="#0a0a0a">
<path d="M18.7 371.4 H24.5 L21.6 374.4 Z"/>
<path d="M19 576 H24.2 L21.6 578.8 Z"/>
<path d="M19 703.2 H24 L21.5 706 Z"/>
</g>
<!-- snap icons -->
<g fill="none" stroke="#1a2235" stroke-width="1.1">
<path d="M15.5 415.2 V425.8 M15.5 429.6 V434.8 M8.9 427.7 H13.6 M17.4 427.7 H20.6"/>
<circle cx="15.5" cy="427.7" r="1.9"/>
<ellipse cx="21" cy="418.4" rx="1.5" ry="1.9"/>
<circle cx="10" cy="459.4" r="1.9"/><circle cx="16" cy="452.3" r="1.9"/><circle cx="22" cy="445.2" r="1.9"/>
<path d="M11.3 458 L14.7 453.8 M17.3 450.8 L20.7 446.7"/>
<path d="M8.9 469.8 L14.5 476.8 M17.5 480.4 L23.7 486.8 M23.7 469.8 L17.5 476.8 M14.5 480.4 L8.9 486.8"/>
<circle cx="16" cy="478.6" r="1.9"/>
<path d="M9.2 506.3 H14.7 M18.5 506.3 H20"/>
<circle cx="16.6" cy="506.3" r="1.9"/>
<path d="M9.9 525.2 L12.3 527.5 M15.3 530.7 L23.5 540.1"/>
<circle cx="13.8" cy="529.1" r="1.9"/>
<circle cx="17" cy="560.3" r="1.9"/>
</g>
<path d="M16.6 497.2 V504.4 M16.6 508.2 V514.7" stroke="#8a8a8a" stroke-width="1.2"/>
<g fill="#1a2235">
<path d="M21.3 427.7 L24.3 423.6 V431.8 Z"/>
<path d="M21 454 L24 450 V458 Z"/>
<path d="M20.6 478 L23.6 474 V482 Z"/>
<path d="M20.3 506.3 L23.5 502 V510.6 Z"/>
<path d="M18.2 528.4 L23 524.6 V532 Z"/>
<path d="M20.2 560.3 L23.4 556.3 V564.3 Z"/>
</g>
<!-- dotted grid -->
<g><rect x="8.0" y="549.70" width="1.2" height="1.2" fill="#111"/><rect x="12.9" y="549.70" width="1.2" height="1.2" fill="#111"/><rect x="17.8" y="549.70" width="1.2" height="1.2" fill="#111"/><rect x="21.0" y="549.70" width="1.2" height="1.2" fill="#111"/><rect x="10.0" y="549.80" width="2.2" height="1" fill="#6a6a6a"/><rect x="14.9" y="549.80" width="2.2" height="1" fill="#6a6a6a"/><rect x="22.5" y="549.80" width="2.2" height="1" fill="#6a6a6a"/><rect x="8.0" y="551.73" width="1.2" height="1.2" fill="#111"/><rect x="12.9" y="551.73" width="1.2" height="1.2" fill="#111"/><rect x="17.8" y="551.73" width="1.2" height="1.2" fill="#111"/><rect x="21.0" y="551.73" width="1.2" height="1.2" fill="#111"/><rect x="10.0" y="551.83" width="2.2" height="1" fill="#6a6a6a"/><rect x="14.9" y="551.83" width="2.2" height="1" fill="#6a6a6a"/><rect x="22.5" y="551.83" width="2.2" height="1" fill="#6a6a6a"/><rect x="8.0" y="553.76" width="1.2" height="1.2" fill="#111"/><rect x="12.9" y="553.76" width="1.2" height="1.2" fill="#111"/><rect x="17.8" y="553.76" width="1.2" height="1.2" fill="#111"/><rect x="21.0" y="553.76" width="1.2" height="1.2" fill="#111"/><rect x="10.0" y="553.86" width="2.2" height="1" fill="#6a6a6a"/><rect x="14.9" y="553.86" width="2.2" height="1" fill="#6a6a6a"/><rect x="22.5" y="553.86" width="2.2" height="1" fill="#6a6a6a"/><rect x="8.0" y="555.79" width="1.2" height="1.2" fill="#111"/><rect x="12.9" y="555.79" width="1.2" height="1.2" fill="#111"/><rect x="10.0" y="555.89" width="2.2" height="1" fill="#6a6a6a"/><rect x="8.0" y="557.82" width="1.2" height="1.2" fill="#111"/><rect x="12.9" y="557.82" width="1.2" height="1.2" fill="#111"/><rect x="10.0" y="557.92" width="2.2" height="1" fill="#6a6a6a"/><rect x="8.0" y="559.85" width="1.2" height="1.2" fill="#111"/><rect x="12.9" y="559.85" width="1.2" height="1.2" fill="#111"/><rect x="10.0" y="559.95" width="2.2" height="1" fill="#6a6a6a"/><rect x="8.0" y="561.88" width="1.2" height="1.2" fill="#111"/><rect x="12.9" y="561.88" width="1.2" height="1.2" fill="#111"/><rect x="10.0" y="561.98" width="2.2" height="1" fill="#6a6a6a"/><rect x="8.0" y="563.91" width="1.2" height="1.2" fill="#111"/><rect x="12.9" y="563.91" width="1.2" height="1.2" fill="#111"/><rect x="17.8" y="563.91" width="1.2" height="1.2" fill="#111"/><rect x="21.0" y="563.91" width="1.2" height="1.2" fill="#111"/><rect x="10.0" y="564.01" width="2.2" height="1" fill="#6a6a6a"/><rect x="14.9" y="564.01" width="2.2" height="1" fill="#6a6a6a"/><rect x="22.5" y="564.01" width="2.2" height="1" fill="#6a6a6a"/><rect x="8.0" y="565.94" width="1.2" height="1.2" fill="#111"/><rect x="12.9" y="565.94" width="1.2" height="1.2" fill="#111"/><rect x="17.8" y="565.94" width="1.2" height="1.2" fill="#111"/><rect x="21.0" y="565.94" width="1.2" height="1.2" fill="#111"/><rect x="10.0" y="566.04" width="2.2" height="1" fill="#6a6a6a"/><rect x="14.9" y="566.04" width="2.2" height="1" fill="#6a6a6a"/><rect x="22.5" y="566.04" width="2.2" height="1" fill="#6a6a6a"/><rect x="8.0" y="567.97" width="1.2" height="1.2" fill="#111"/><rect x="12.9" y="567.97" width="1.2" height="1.2" fill="#111"/><rect x="17.8" y="567.97" width="1.2" height="1.2" fill="#111"/><rect x="21.0" y="567.97" width="1.2" height="1.2" fill="#111"/><rect x="10.0" y="568.07" width="2.2" height="1" fill="#6a6a6a"/><rect x="14.9" y="568.07" width="2.2" height="1" fill="#6a6a6a"/><rect x="22.5" y="568.07" width="2.2" height="1" fill="#6a6a6a"/></g>
<ellipse cx="16.9" cy="560.2" rx="1.6" ry="2.1" fill="none" stroke="#2a3045" stroke-width="1.1"/>
<path d="M20.9 560.2 L23.9 556.4 V564 Z" fill="#1a2235"/>
<rect x="20.6" y="555.6" width="1.1" height="1.1" fill="#111"/><rect x="20.6" y="563.6" width="1.1" height="1.1" fill="#111"/>
<!-- cursor arrows for all/PS/clr -->
<g stroke="#1f2a40" stroke-width="0.8" fill="#7a90b2">
<path d="M19.8 595.7 V603.4 L21.6 601.8 L23 605.6 L24 605 L22.8 601.4 L24.9 601.2 Z"/>
<path d="M19.8 623.2 V630.9 L21.6 629.3 L23 633.1 L24 632.5 L22.8 628.9 L24.9 628.7 Z"/>
<path d="M19.8 677.4 V685.1 L21.6 683.5 L23 687.3 L24 686.7 L22.8 683.1 L24.9 682.9 Z"/>
</g>
<path d="M19.8 650.7 V658.4 L21.6 656.8 L23 660.6 L24 660 L22.8 656.4 L24.9 656.2 Z" fill="#c4c4c4" stroke="#b0b0b0" stroke-width="0.8"/>
<g fill="none" stroke="#9aa8c0" stroke-width="0.8">
<circle cx="9.5" cy="679" r="1.1"/><circle cx="13.5" cy="679" r="1.1"/><circle cx="17.5" cy="679" r="1.1"/>
<circle cx="9.5" cy="683" r="1.1"/><circle cx="13.5" cy="683" r="1.1"/><circle cx="17.5" cy="683" r="1.1"/>
<circle cx="9.5" cy="687" r="1.1"/><circle cx="13.5" cy="687" r="1.1"/><circle cx="17.5" cy="687" r="1.1"/><circle cx="21.5" cy="687" r="1.1"/>
<circle cx="9.5" cy="691" r="1.1"/><circle cx="13.5" cy="691" r="1.1"/><circle cx="17.5" cy="691" r="1.1"/><circle cx="21.5" cy="691" r="1.1"/>
<circle cx="9.5" cy="695" r="1.1"/><circle cx="13.5" cy="695" r="1.1"/><circle cx="17.5" cy="695" r="1.1"/><circle cx="21.5" cy="695" r="1.1"/>
</g>
<path d="M9 676.5 L21.5 694.8" stroke="#1f2a40" stroke-width="1.4"/>
</svg>
<div class="t" style="left:8px;top:603.5px;font-size:10.5px;color:#2a3858">all</div>
<div class="t" style="left:8px;top:632px;font-size:9.5px;color:#2a3858;transform:scaleX(0.8);transform-origin:left">PS</div>
<div class="t" style="left:8px;top:657px;font-size:10.5px;color:#b4b4b4">clr</div>

<!-- TAB -->
<svg style="left:0;top:0" width="1366" height="768">
<defs>
<linearGradient id="gTab" x1="0" y1="0" x2="0" y2="1"><stop offset="0" stop-color="#dbe6f3"/><stop offset="0.45" stop-color="#b9cce4"/><stop offset="1" stop-color="#c6d8ee"/></linearGradient>
<linearGradient id="gIco" x1="0" y1="0" x2="1" y2="1"><stop offset="0" stop-color="#ffd800"/><stop offset="1" stop-color="#ffb000"/></linearGradient>
</defs>
<path d="M46.5 109.5 V93.5 Q46.5 90.5 49.5 90.5 H145.5 Q148.5 90.5 148.5 93.5 V109.5" fill="url(#gTab)" stroke="#5d6b80" stroke-width="1"/>
<rect x="47" y="108.5" width="101" height="2" fill="#c6d8ee"/>
<!-- sap icon in tab -->
<g>
<rect x="54.5" y="91" width="14.5" height="15" fill="#ffe600"/>
<rect x="55.3" y="91.8" width="12.9" height="13.4" fill="none" stroke="#7a2a00" stroke-width="1" stroke-dasharray="1.6 2"/>
<path d="M56.5 93 L67 104 M67 93 L56.5 104" stroke="#ee1100" stroke-width="2.8"/>
<path d="M54 90.5 L58 94 M69.5 90.5 L65.5 94 M54 106.6 L58 103 M69.5 106.6 L65.5 103" stroke="#dd1100" stroke-width="2.4"/>
<path d="M61.7 95.5 V101.5 M58.7 98.5 H64.7" stroke="#ffd9c0" stroke-width="1"/>
<circle cx="56" cy="93" r="0.8" fill="#fff"/><circle cx="67.5" cy="104" r="0.8" fill="#fff"/>
</g>
<!-- sap icon in title -->
<g>
<path d="M12.5 7.4 Q20 10.2 27.5 7.4 Q24.8 15 27.5 22.4 Q20 19.8 12.5 22.4 Q15.2 15 12.5 7.4 Z" fill="#ffe800" stroke="#f06030" stroke-width="1.1"/>
<path d="M14.6 9.4 Q20 11.4 25.4 9.4 Q23.6 15 25.4 20.4 Q20 18.6 14.6 20.4 Q16.4 15 14.6 9.4 Z" fill="none" stroke="#ffa000" stroke-width="1.2"/>
<path d="M16.2 11 L23.8 19 M23.8 11 L16.2 19" stroke="#f01800" stroke-width="3"/>
<circle cx="20" cy="15" r="1.5" fill="#ff9060"/>
<g fill="#fff"><circle cx="14.6" cy="9.6" r="0.7"/><circle cx="25.4" cy="9.6" r="0.7"/><circle cx="14.6" cy="20.3" r="0.7"/><circle cx="25.4" cy="20.3" r="0.7"/></g>
<g fill="#8a1c1c"><circle cx="12.6" cy="7.5" r="0.9"/><circle cx="27.4" cy="7.5" r="0.9"/><circle cx="12.6" cy="22.3" r="0.9"/><circle cx="27.4" cy="22.3" r="0.9"/></g>
</g>
</svg>
<div class="t" style="left:72.8px;top:92.6px;font-size:12.6px;color:#0c1530;transform:scaleX(0.94);transform-origin:left">3-D View</div>

<!-- WATERMARK -->
<svg style="left:0;top:0" width="1366" height="768">
<defs>
<linearGradient id="gArc" x1="0" y1="0" x2="1" y2="0"><stop offset="0" stop-color="#dfe1e4" stop-opacity="0"/><stop offset="0.3" stop-color="#d8dbdf"/><stop offset="0.7" stop-color="#d8dbdf"/><stop offset="1" stop-color="#dfe1e4" stop-opacity="0"/></linearGradient>
</defs>
<g opacity="0.9">
<!-- stars -->
<path d="M1200.7 31 Q1201.6 37.4 1207.5 38.3 Q1201.6 39.2 1200.7 45.6 Q1199.8 39.2 1193.9 38.3 Q1199.8 37.4 1200.7 31 Z" fill="#d9dce0"/>
<path d="M1222.8 44.6 Q1223.3 47.7 1226.4 48.2 Q1223.3 48.7 1222.8 51.8 Q1222.3 48.7 1219.2 48.2 Q1222.3 47.7 1222.8 44.6 Z" fill="#d6d9dd"/>
<path d="M1179.7 55.7 Q1180.2 58.8 1183.3 59.3 Q1180.2 59.8 1179.7 62.9 Q1179.2 59.8 1176.1 59.3 Q1179.2 58.8 1179.7 55.7 Z" fill="#d6d9dd"/>
<path d="M1242.7 59.2 Q1243.2 62.1 1246.1 62.6 Q1243.2 63.1 1242.7 66 Q1242.2 63.1 1239.3 62.6 Q1242.2 62.1 1242.7 59.2 Z" fill="#dadde1"/>
<!-- building chevrons -->
<g>
<path d="M1189.5 58.9 L1212.2 48 V63.6 L1189.5 69.5 Z" fill="#dcdfe3"/>
<path d="M1212.2 48 L1225.5 66.7 V76.1 L1212.2 63.6 Z" fill="#cdd0d5"/>
<path d="M1189.5 80 L1211 75.3 V83 L1189.5 91 Z" fill="#dfe1e5"/>
<path d="M1211 75.3 L1223 87.8 V93.3 L1211 83 Z" fill="#d2d5d9"/>
<path d="M1189.5 101.9 L1211 96.4 V103.4 L1189.5 109 Z" fill="#e1e3e6"/>
<path d="M1211 96.4 L1220.5 106.5 V111 L1211 103.4 Z" fill="#d5d8dc"/>
<path d="M1189.5 119.8 L1209.8 114.4 V122.2 L1189.5 127.7 Z" fill="#e2e4e7"/>
<path d="M1209.8 114.4 L1218.4 123.7 V129.2 L1209.8 122.2 Z" fill="#d7dade"/>
<path d="M1189.5 137.8 L1209 133.1 V148 H1189.5 Z" fill="#e3e5e8"/>
<path d="M1209 133.1 L1217 137.8 V148 H1209 Z" fill="#d9dce0"/>
</g>
<path d="M1118.8 164.4 Q1212 134 1304.7 163.3" fill="none" stroke="url(#gArc)" stroke-width="2.2"/>
</g>
</svg>
<div class="t" style="left:1133px;top:158.5px;font-size:25px;font-weight:bold;color:#d4d7db;letter-spacing:1.3px;transform:scaleY(1.03)">CEINTPERU</div>
<!-- mouse cursor -->
<svg style="left:0;top:0" width="1366" height="768">
<path d="M1036.6 421.1 V437.1 L1040.6 433.6 L1043.6 439.6 L1045.8 438.6 L1043 432.8 L1048.4 432.6 Z" fill="#fff" stroke="#111" stroke-width="1.1" stroke-linejoin="round"/>
</svg>

</body></html>
